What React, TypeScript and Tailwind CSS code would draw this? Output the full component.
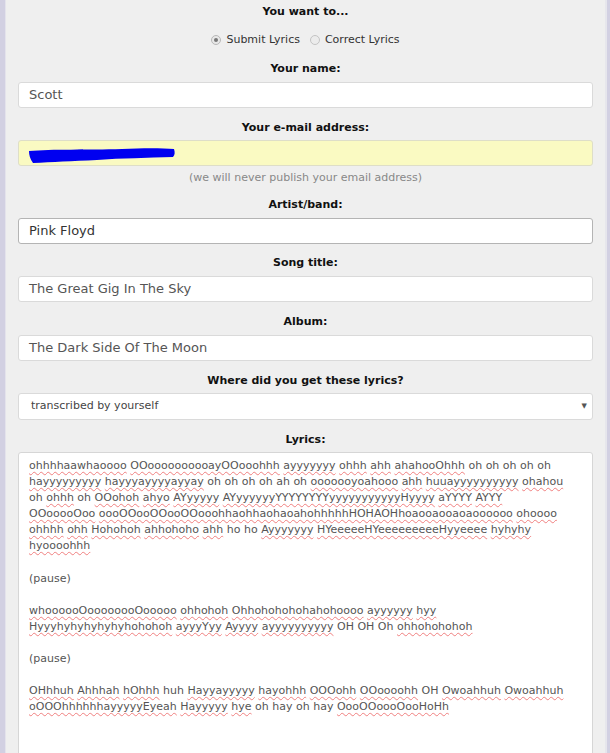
import React from "react";

const ok = new Set(["oh", "ah", "ho", "OH", "Oh", "huh", "hay", "(pause)"]);

const lyrics = [
  "ohhhhaawhaoooo OOoooooooooayOOooohhh ayyyyyyy ohhh ahh ahahooOhhh oh oh oh oh oh",
  "hayyyyyyyyy hayyyayyyyayyay oh oh oh oh ah oh ooooooyoahooo ahh huuayyyyyyyyyy ohahou",
  "oh ohhh oh OOohoh ahyo AYyyyyy AYyyyyyyYYYYYYYYyyyyyyyyyyyHyyyy aYYYY AYYY",
  "OOooooOoo oooOOooOOooOOooohhaohhaohaoahohhhhhHOHAOHhoaooaooaoaoooooo ohoooo",
  "ohhhh ohh Hohohoh ahhohoho ahh ho ho Ayyyyyyy HYeeeeeHYeeeeeeeeeHyyeeee hyhyhy",
  "hyoooohhh",
  "",
  "(pause)",
  "",
  "whoooooOoooooooOooooo ohhohoh Ohhohohohohahohoooo ayyyyyy hyy",
  "Hyyyhyhyhyhyhyhohohoh ayyyYyy Ayyyy ayyyyyyyyyy OH OH Oh ohhohohohoh",
  "",
  "(pause)",
  "",
  "OHhhuh Ahhhah hOhhh huh Hayyayyyyy hayohhh OOOohh OOoooohh OH Owoahhuh Owoahhuh",
  "oOOOhhhhhhayyyyyEyeah Hayyyyy hye oh hay oh hay OooOOoooOooHoHh",
];

function Line({ text }: { text: string }) {
  if (!text) return <div className="h-[16.1px]" />;
  const words = text.split(" ");
  return (
    <div className="whitespace-nowrap h-[16.1px]">
      {words.map((w, i) => (
        <React.Fragment key={i}>
          {ok.has(w) ? (
            <span>{w}</span>
          ) : (
            <span className="underline decoration-wavy decoration-[#f08080] decoration-1 underline-offset-[2px]">
              {w}
            </span>
          )}
          {i < words.length - 1 ? " " : ""}
        </React.Fragment>
      ))}
    </div>
  );
}

function Label({ children }: { children: React.ReactNode }) {
  return (
    <div className="h-[14px] leading-[14px] text-center text-[11px] font-bold text-[#111]">
      {children}
    </div>
  );
}

function Field({ value, dark }: { value: string; dark?: boolean }) {
  return (
    <div
      className={
        "mt-[6px] h-[26px] rounded-[3px] bg-white border px-[10px] flex items-center text-[13px] " +
        (dark ? "border-[#b4b4b4] text-[#333]" : "border-[#dadada] text-[#555]")
      }
    >
      {value}
    </div>
  );
}

export default function App() {
  return (
    <div
      className="flex w-[610px] h-[753px] overflow-hidden bg-[#efefef]"
      style={{ fontFamily: '"DejaVu Sans", Verdana, sans-serif' }}
    >
      <div className="w-[5px] shrink-0 bg-[#d2d0e2]" />
      <div className="w-[1px] shrink-0 bg-[#e4e3ec]" />
      <div className="flex-1 min-w-0 px-[12px] pt-[5px]">
        <Label>You want to...</Label>
        <div className="mt-[14px] h-[14px] flex justify-center items-center gap-[10px] text-[11px] text-[#333]">
          <label className="flex items-center gap-[5px]">
            <span className="w-[10px] h-[10px] rounded-full border border-[#b8b8b8] bg-[#e8e8e8] flex items-center justify-center">
              <span className="w-[4px] h-[4px] rounded-full bg-[#777]" />
            </span>
            Submit Lyrics
          </label>
          <label className="flex items-center gap-[5px]">
            <span className="w-[10px] h-[10px] rounded-full border border-[#c4c4c4] bg-[#ececec]" />
            Correct Lyrics
          </label>
        </div>

        <div className="mt-[15px]">
          <Label>Your name:</Label>
          <Field value="Scott" />
        </div>

        <div className="mt-[13px]">
          <Label>Your e-mail address:</Label>
          <div className="mt-[5px] h-[26px] rounded-[3px] bg-[#fafac2] border border-[#dedec8] px-[8px] flex items-center">
            <svg width="150" height="20" viewBox="0 0 150 20" className="mt-[6px]">
              <path
                d="M2 5 C25 3 60 4 95 3 C115 2 135 2 147 3 C148 6 148 9 146 11 C120 12 95 12 70 14 C45 15 25 16 6 17 C3 13 2 9 2 5 Z"
                fill="#0000f0"
              />
            </svg>
          </div>
          <div className="mt-[5px] h-[14px] leading-[14px] text-center text-[11px] text-[#888]">
            (we will never publish your email address)
          </div>
        </div>

        <div className="mt-[13px]">
          <Label>Artist/band:</Label>
          <Field value="Pink Floyd" dark />
        </div>

        <div className="mt-[12px]">
          <Label>Song title:</Label>
          <Field value="The Great Gig In The Sky" />
        </div>

        <div className="mt-[13px]">
          <Label>Album:</Label>
          <Field value="The Dark Side Of The Moon" />
        </div>

        <div className="mt-[13px]">
          <Label>Where did you get these lyrics?</Label>
          <div className="mt-[5px] h-[27px] rounded-[3px] bg-white border border-[#dadada] pl-[12px] pr-[5px] flex items-center justify-between text-[11px] text-[#444]">
            <span>transcribed by yourself</span>
            <span className="text-[7px] text-[#555]">▼</span>
          </div>
        </div>

        <div className="mt-[13px]">
          <Label>Lyrics:</Label>
          <div className="mt-[5px] h-[320px] overflow-hidden rounded-t-[3px] bg-white border border-[#d6d6d6] px-[10px] pt-[5px] text-[11px] leading-[16.1px] text-[#555]">
            {lyrics.map((l, i) => (
              <Line key={i} text={l} />
            ))}
          </div>
        </div>
      </div>
      <div className="w-[2px] shrink-0 bg-[#e6e6ec]" />
      <div className="w-[3px] shrink-0 bg-[#d2d0e2]" />
    </div>
  );
}
